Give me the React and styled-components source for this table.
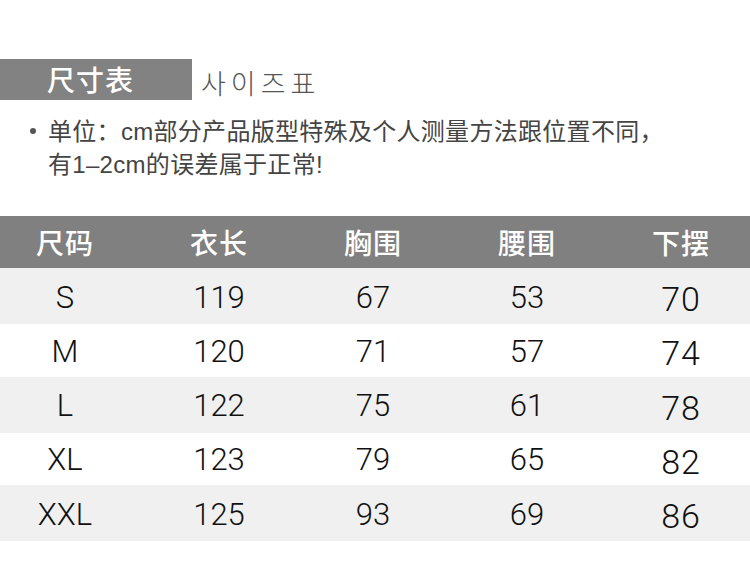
import React from "react";
import styled, { createGlobalStyle } from "styled-components";

const rows = [
  ["S", "119", "67", "53", "70"],
  ["M", "120", "71", "57", "74"],
  ["L", "122", "75", "61", "78"],
  ["XL", "123", "79", "65", "82"],
  ["XXL", "125", "93", "69", "86"],
];
const heads = ["尺码", "衣长", "胸围", "腰围", "下摆"];

const App = () => {
  return (
    <Page>
      <Global />
      <TitleRow>
        <TitleBox>尺寸表</TitleBox>
        <SubTitle>사이즈표</SubTitle>
      </TitleRow>
      <Note>
        <p>
          <Dot />
          单位：cm部分产品版型特殊及个人测量方法跟位置不同，
        </p>
        <p>有1–2cm的误差属于正常!</p>
      </Note>
      <Table>
        <Row $head>
          {heads.map((h) => (
            <HeadCell key={h}>{h}</HeadCell>
          ))}
        </Row>
        {rows.map((r, i) => (
          <Row key={r[0]} $gray={i % 2 === 0}>
            {r.map((v, j) => (
              <Cell key={j} $last={j === 4}>
                {v}
              </Cell>
            ))}
          </Row>
        ))}
      </Table>
    </Page>
  );
};

const Global = createGlobalStyle`
  body {
    margin: 0;
    background: #fff;
  }
`;

const Page = styled.div`
  width: 750px;
  height: 582px;
  padding-top: 59px;
  box-sizing: border-box;
  font-family: "Noto Sans CJK SC", "Liberation Sans", sans-serif;
`;

const TitleRow = styled.div`
  display: flex;
  align-items: center;
  height: 41px;
`;

const TitleBox = styled.div`
  width: 192px;
  height: 41px;
  background-color: #828282;
  color: #fff;
  font-size: 28px;
  font-weight: 500;
  line-height: 41px;
  padding-left: 47px;
  box-sizing: border-box;
  letter-spacing: 1px;
`;

const SubTitle = styled.div`
  margin-left: 9px;
  margin-top: 6px;
  font-family: "Noto Sans CJK KR", sans-serif;
  font-weight: 300;
  font-size: 27px;
  letter-spacing: 5px;
  color: #555;
`;

const Note = styled.div`
  margin-top: 15px;
  padding-left: 48px;
  color: #444;
  font-family: "Liberation Sans", "Noto Sans CJK SC", sans-serif;
  font-size: 24px;
  letter-spacing: 0.3px;
  & p {
    margin: 0;
    line-height: 33px;
    position: relative;
  }
`;

const Dot = styled.span`
  position: absolute;
  left: -18px;
  top: 13px;
  width: 6px;
  height: 6px;
  border-radius: 50%;
  background-color: #555;
`;

const Table = styled.div`
  margin-top: 35px;
`;

const Row = styled.div`
  display: grid;
  grid-template-columns: repeat(5, 108px);
  column-gap: 46px;
  padding-left: 11px;
  align-items: center;
  height: ${(p) => (p.$head ? "52px" : p.$gray ? "56px" : "52.5px")};
  background-color: ${(p) =>
    p.$head ? "#808080" : p.$gray ? "#f0f0f0" : "#fff"};
`;

const HeadCell = styled.div`
  text-align: center;
  color: #fff;
  font-size: 28px;
  font-weight: 500;
  letter-spacing: 1px;
`;

const Cell = styled.div`
  text-align: center;
  color: #111;
  font-family: Roboto, "Liberation Sans", sans-serif;
  font-weight: 300;
  font-size: ${(p) => (p.$last ? "34px" : "31px")};
  letter-spacing: ${(p) => (p.$last ? "1px" : "0")};
  padding-top: ${(p) => (p.$last ? "6px" : "2px")};
`;

export default App;
